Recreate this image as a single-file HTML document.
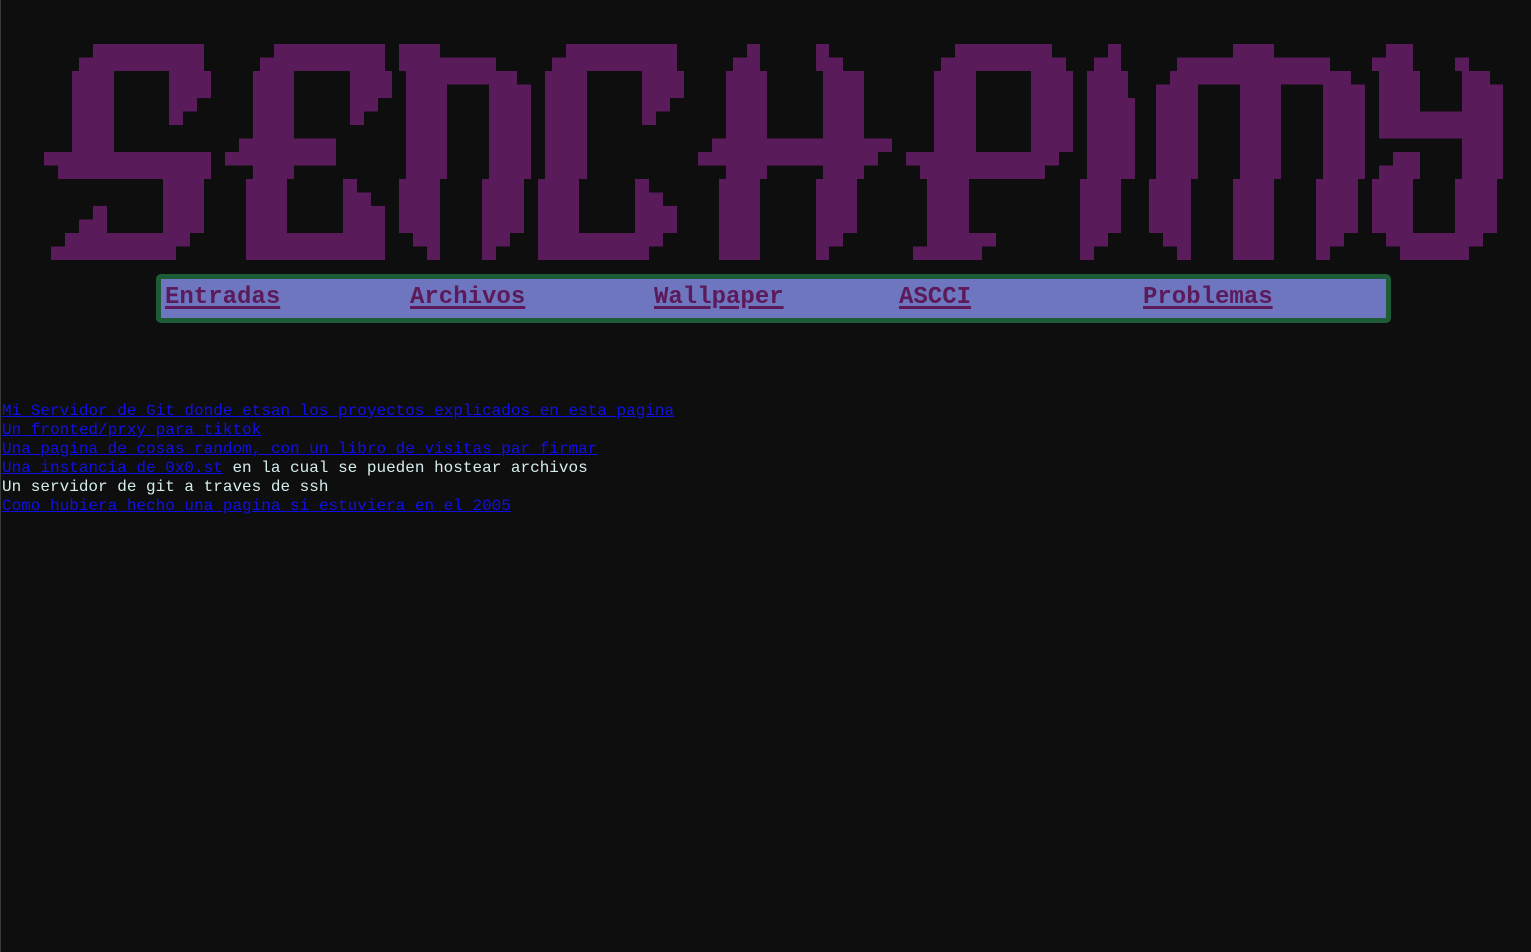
<!DOCTYPE html>
<html><head><meta charset="utf-8">
<style>
html,body{margin:0;padding:0;background:#0f0e0f;width:1531px;height:952px;overflow:hidden;}
body{border-left:1px solid #3a3a3a;box-sizing:border-box;font-family:"Liberation Mono",monospace;}
#logo{position:absolute;left:0;top:0;}
#nav{position:absolute;left:156px;top:274px;width:1235px;height:49px;box-sizing:border-box;border:5px solid #1e5c38;border-radius:5px;background:#6d76bf;}
#nav a{position:absolute;top:4px;font-size:24px;font-weight:bold;color:#5c1a5a;text-decoration:underline;text-decoration-thickness:3px;text-underline-offset:3px;line-height:30px;}
#list{position:absolute;left:2px;top:402px;font-size:16px;line-height:19px;color:#d4ecec;}
#list a{color:#1010e6;text-decoration:underline;}
</style></head><body>
<svg id="logo" width="1531" height="270" xmlns="http://www.w3.org/2000/svg" fill="#5a1b5a">
<!-- S -->
<rect x="93" y="44" width="111" height="27"/><rect x="79" y="57.5" width="14" height="13.5"/>
<rect x="72" y="71" width="42" height="81"/>
<rect x="169" y="71" width="42" height="27"/><rect x="169" y="98" width="14" height="27"/><rect x="183" y="98" width="14" height="13.5"/>
<rect x="44" y="152" width="167" height="13.5"/><rect x="58" y="165.5" width="153" height="13.5"/>
<rect x="163" y="179" width="41" height="54"/>
<rect x="93" y="206" width="14" height="27"/><rect x="79" y="219.5" width="14" height="13.5"/>
<rect x="65" y="233" width="125" height="13.5"/><rect x="51" y="246.5" width="125" height="13.5"/>
<!-- E -->
<rect x="274" y="44" width="111" height="27"/><rect x="260" y="57.5" width="14" height="13.5"/>
<rect x="253" y="71" width="41" height="108"/>
<rect x="350" y="71" width="42" height="27"/><rect x="350" y="98" width="14" height="27"/><rect x="364" y="98" width="14" height="13.5"/>
<rect x="239" y="138.5" width="97" height="13.5"/><rect x="225" y="152" width="111" height="13.5"/>
<rect x="246" y="179" width="41" height="81"/>
<rect x="343" y="179" width="14" height="27"/><rect x="357" y="192.5" width="14" height="13.5"/>
<rect x="343" y="206" width="42" height="54"/><rect x="287" y="233" width="56" height="27"/>
<!-- N -->
<rect x="399" y="44" width="41" height="27"/><rect x="440" y="57.5" width="56" height="13.5"/>
<rect x="406" y="71" width="111" height="13.5"/>
<rect x="406" y="71" width="41" height="108"/><rect x="489" y="84.5" width="42" height="94.5"/><rect x="489" y="71" width="28" height="14"/>
<rect x="399" y="179" width="41" height="54"/><rect x="482" y="179" width="42" height="54"/>
<rect x="427" y="233" width="13" height="27"/><rect x="413" y="233" width="14" height="13.5"/>
<rect x="482" y="233" width="14" height="27"/><rect x="496" y="233" width="14" height="13.5"/>
<!-- C -->
<rect x="566" y="44" width="111" height="27"/><rect x="552" y="57.5" width="14" height="13.5"/>
<rect x="545" y="71" width="42" height="108"/>
<rect x="642" y="71" width="42" height="27"/><rect x="642" y="98" width="14" height="27"/><rect x="656" y="98" width="14" height="13.5"/>
<rect x="538" y="179" width="41" height="81"/>
<rect x="635" y="179" width="14" height="27"/><rect x="649" y="192.5" width="14" height="13.5"/>
<rect x="635" y="206" width="42" height="27"/><rect x="579" y="233" width="70" height="27"/><rect x="649" y="233" width="14" height="13.5"/>
<!-- H -->
<rect x="747" y="44" width="13" height="27"/><rect x="733" y="57.5" width="14" height="13.5"/>
<rect x="816" y="44" width="13" height="27"/><rect x="829" y="57.5" width="14" height="13.5"/>
<rect x="726" y="71" width="41" height="108"/><rect x="823" y="71" width="41" height="108"/>
<rect x="712" y="138.5" width="180" height="13.5"/><rect x="698" y="152" width="180" height="13.5"/>
<rect x="719" y="179" width="41" height="81"/><rect x="816" y="179" width="41" height="54"/>
<rect x="816" y="233" width="13" height="27"/><rect x="829" y="233" width="14" height="13.5"/>
<!-- P -->
<rect x="955" y="44" width="97" height="27"/><rect x="941" y="57.5" width="125" height="13.5"/>
<rect x="934" y="71" width="42" height="81"/><rect x="1031" y="71" width="42" height="81"/>
<rect x="906" y="152" width="153" height="13.5"/><rect x="920" y="165.5" width="125" height="13.5"/>
<rect x="927" y="179" width="42" height="54"/>
<rect x="927" y="233" width="69" height="13.5"/><rect x="913" y="246.5" width="69" height="13.5"/><rect x="927" y="233" width="55" height="27"/>
<!-- I -->
<rect x="1108" y="44" width="13" height="27"/><rect x="1094" y="57.5" width="14" height="13.5"/>
<rect x="1087" y="71" width="41" height="27"/><rect x="1087" y="98" width="48" height="81"/>
<rect x="1080" y="179" width="41" height="54"/>
<rect x="1080" y="233" width="14" height="27"/><rect x="1094" y="233" width="14" height="13.5"/>
<!-- M -->
<rect x="1233" y="44" width="41" height="27"/><rect x="1177" y="57.5" width="153" height="13.5"/>
<rect x="1170" y="71" width="181" height="13.5"/>
<rect x="1156" y="84.5" width="42" height="94.5"/><rect x="1240" y="71" width="41" height="108"/><rect x="1323" y="84.5" width="42" height="94.5"/>
<rect x="1149" y="179" width="42" height="54"/><rect x="1233" y="179" width="41" height="81"/><rect x="1316" y="179" width="42" height="54"/>
<rect x="1177" y="233" width="14" height="27"/><rect x="1163" y="233" width="14" height="13.5"/>
<rect x="1316" y="233" width="14" height="27"/><rect x="1330" y="233" width="14" height="13.5"/>
<!-- Y -->
<rect x="1386" y="44" width="27" height="27"/><rect x="1372" y="57.5" width="14" height="13.5"/><rect x="1455" y="57.5" width="14" height="13.5"/>
<rect x="1379" y="71" width="41" height="54"/>
<rect x="1462" y="71" width="28" height="13.5"/><rect x="1462" y="84.5" width="41" height="94.5"/>
<rect x="1420" y="111.5" width="42" height="13.5"/><rect x="1379" y="125" width="124" height="13.5"/>
<rect x="1393" y="152" width="27" height="13.5"/><rect x="1379" y="165.5" width="41" height="13.5"/>
<rect x="1372" y="179" width="41" height="54"/><rect x="1455" y="179" width="42" height="54"/>
<rect x="1386" y="233" width="97" height="13.5"/><rect x="1400" y="246.5" width="69" height="13.5"/>
</svg>
<div id="nav">
<a style="left:4px">Entradas</a>
<a style="left:249px">Archivos</a>
<a style="left:493px">Wallpaper</a>
<a style="left:738px">ASCCI</a>
<a style="left:982px">Problemas</a>
</div>
<div id="list">
<a>Mi Servidor de Git donde etsan los proyectos explicados en esta pagina</a><br>
<a>Un fronted/prxy para tiktok</a><br>
<a>Una pagina de cosas random, con un libro de visitas par firmar</a><br>
<a>Una instancia de 0x0.st</a> en la cual se pueden hostear archivos<br>
Un servidor de git a traves de ssh<br>
<a>Como hubiera hecho una pagina si estuviera en el 2005</a>
</div>
</body></html>
